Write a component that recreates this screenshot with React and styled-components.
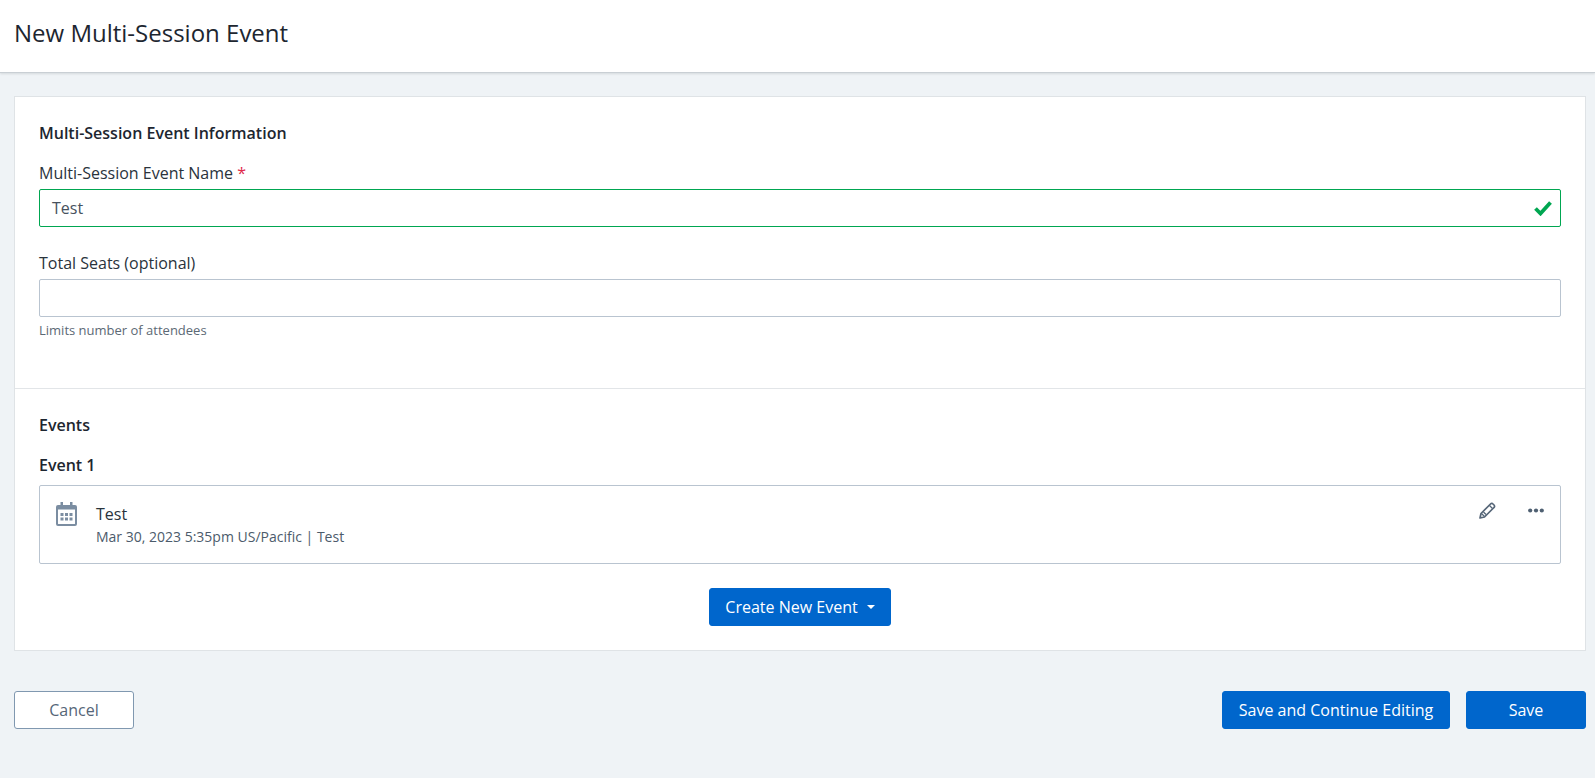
import React from "react";
import styled, { createGlobalStyle } from "styled-components";

const Global = createGlobalStyle`
  html, body { margin: 0; padding: 0; background: #eff3f6; }
  body { font-family: "Open Sans", "Liberation Sans", sans-serif; color: #1d2630; }
  * { box-sizing: border-box; }
`;
const Page = styled.div`
  min-height: 778px;
  background: #eff3f6;
`;
const Header = styled.header`
  height: 73px;
  background: #fff;
  border-bottom: 1px solid #c9cfd4;
  box-shadow: 0 1px 2px rgba(30, 40, 50, 0.12);
  display: flex;
  align-items: center;
  padding: 0 0 7px 14px;
`;
const Title = styled.h1`
  margin: 0;
  font-size: 24px;
  font-weight: 400;
  color: #1d2630;
`;
const Main = styled.main`
  padding: 23px 9px 0 14px;
`;
const Card = styled.section`
  background: #fff;
  border: 1px solid #dfe3e6;
  height: 555px;
`;
const InfoSection = styled.div`
  height: 292px;
  padding: 24px 24px 0;
  border-bottom: 1px solid #e2e5e8;
`;
const EventsSection = styled.div`
  padding: 24px 24px 0;
`;
const SectionTitle = styled.h2`
  margin: 0;
  font-size: 16px;
  line-height: 24px;
  font-weight: 600;
  color: #1d2630;
`;
const Field = styled.div`
  margin-top: ${(p) => p.$top}px;
`;
const Label = styled.label`
  display: block;
  font-size: 16px;
  line-height: 24px;
  margin-bottom: 4px;
  color: #2a333c;
`;
const Required = styled.span`
  color: #e0294a;
`;
const InputBox = styled.div`
  position: relative;
  height: 38px;
  border: 1px solid ${(p) => (p.$valid ? "#00a651" : "#b9c4d0")};
  border-radius: 2px;
  display: flex;
  align-items: center;
  padding: 0 12px;
  font-size: 16px;
  color: #47525e;
  background: #fff;
`;
const CheckIcon = styled.svg`
  position: absolute;
  right: 8px;
  top: 10px;
  width: 18px;
  height: 16px;
`;
const Help = styled.div`
  font-size: 13px;
  line-height: 18px;
  margin-top: 4px;
  color: #5c6975;
`;
const EventHeading = styled.h3`
  margin: 16px 0 8px;
  font-size: 16px;
  line-height: 24px;
  font-weight: 600;
  color: #1d2630;
`;
const EventCard = styled.div`
  height: 79px;
  border: 1px solid #b9c4d0;
  border-radius: 2px;
  display: flex;
  align-items: flex-start;
  padding: 16px 16px 0 16px;
`;
const IconSlot = styled.div`
  width: 40px;
  flex: none;
`;
const EventText = styled.div`
  flex: 1;
`;
const EventName = styled.div`
  font-size: 16px;
  line-height: 24px;
  color: #2a333c;
`;
const EventMeta = styled.div`
  font-size: 14px;
  line-height: 22px;
  color: #4c5b6b;
`;
const Actions = styled.div`
  display: flex;
  align-items: center;
  gap: 32px;
`;
const CenterRow = styled.div`
  display: flex;
  justify-content: center;
  margin-top: 24px;
`;
const Button = styled.button`
  height: 38px;
  width: ${(p) => p.$width}px;
  border-radius: 3px;
  border: 1px solid ${(p) => (p.$outline ? "#8098b0" : "#0066cc")};
  background: ${(p) => (p.$outline ? "#fff" : "#0066cc")};
  color: ${(p) => (p.$outline ? "#566678" : "#fff")};
  font-family: inherit;
  font-size: 16px;
  font-weight: 500;
  display: inline-flex;
  align-items: center;
  justify-content: center;
  padding: 0;
`;
const Caret = styled.span`
  display: inline-block;
  margin-left: 9px;
  border-left: 4px solid transparent;
  border-right: 4px solid transparent;
  border-top: 4px solid #fff;
`;
const Footer = styled.div`
  display: flex;
  justify-content: space-between;
  align-items: center;
  padding: 40px 9px 0 14px;
`;
const FooterRight = styled.div`
  display: flex;
  gap: 16px;
`;

const Calendar = () => (
  <svg width="21" height="24" viewBox="0 0 21 24" aria-hidden="true">
    <path
      fill="#7b8da1"
      d="M4.5 0h2.5v3h7V0h2.5v3H19a2 2 0 0 1 2 2v17a2 2 0 0 1-2 2H2a2 2 0 0 1-2-2V5a2 2 0 0 1 2-2h2.5zM2 7.5V21.5a.5.5 0 0 0 .5.5h16a.5.5 0 0 0 .5-.5V7.5z"
    />
    <path
      fill="#7b8da1"
      d="M4.500 11h3v3h-3zM9 11h3v3H9zM13.500 11h3v3h-3zM4.500 15.500h3v3h-3zM9 15.500h3v3H9zM13.500 15.500h3v3h-3z"
    />
  </svg>
);
const Pencil = () => (
  <svg width="17" height="17" viewBox="0 0 17 17" aria-hidden="true">
    <path
      fill="none"
      stroke="#566678"
      strokeWidth="1.7"
      strokeLinejoin="round"
      d="M1 16l1-4.500L11.500 2c.8-.8 1.800-.8 2.500 0l1 1c.8.800.8 1.800 0 2.500L5.500 15z"
    />
    <path fill="none" stroke="#566678" strokeWidth="1.3" d="M2.500 11.500l3 3M4.500 10l2.500 2.500M10.500 3.500l3 3" />
  </svg>
);
const Dots = () => (
  <svg width="16" height="5" viewBox="0 0 16 5" aria-hidden="true">
    <circle cx="2.200" cy="2.500" r="2.100" fill="#4f6072" />
    <circle cx="8" cy="2.500" r="2.100" fill="#4f6072" />
    <circle cx="13.800" cy="2.500" r="2.100" fill="#4f6072" />
  </svg>
);

export default function App() {
  return (
    <Page>
      <Global />
      <Header>
        <Title>New Multi-Session Event</Title>
      </Header>
      <Main>
        <Card>
          <InfoSection>
            <SectionTitle>Multi-Session Event Information</SectionTitle>
            <Field $top={16}>
              <Label>
                Multi-Session Event Name <Required>*</Required>
              </Label>
              <InputBox $valid>
                Test
                <CheckIcon viewBox="0 0 18 16" aria-hidden="true">
                  <path fill="none" stroke="#00a651" strokeWidth="3.800" d="M1.500 8.500l5 5L16.500 2.500" />
                </CheckIcon>
              </InputBox>
            </Field>
            <Field $top={24}>
              <Label>Total Seats (optional)</Label>
              <InputBox />
              <Help>Limits number of attendees</Help>
            </Field>
          </InfoSection>
          <EventsSection>
            <SectionTitle>Events</SectionTitle>
            <EventHeading>Event 1</EventHeading>
            <EventCard>
              <IconSlot>
                <Calendar />
              </IconSlot>
              <EventText>
                <EventName>Test</EventName>
                <EventMeta>Mar 30, 2023 5:35pm US/Pacific | Test</EventMeta>
              </EventText>
              <Actions>
                <Pencil />
                <Dots />
              </Actions>
            </EventCard>
            <CenterRow>
              <Button $width={182}>
                Create New Event
                <Caret />
              </Button>
            </CenterRow>
          </EventsSection>
        </Card>
      </Main>
      <Footer>
        <Button $outline $width={120}>Cancel</Button>
        <FooterRight>
          <Button $width={228}>Save and Continue Editing</Button>
          <Button $width={120}>Save</Button>
        </FooterRight>
      </Footer>
    </Page>
  );
}
